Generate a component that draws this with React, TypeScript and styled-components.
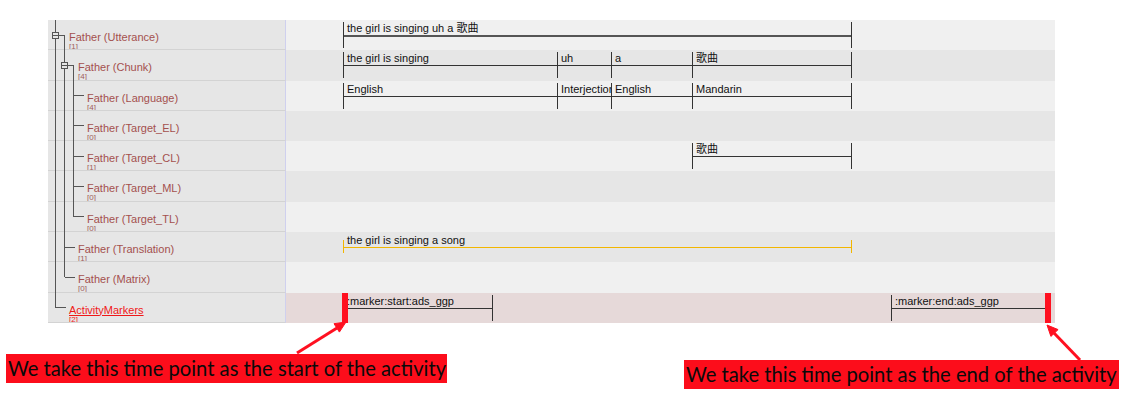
import React from "react";
import styled, { createGlobalStyle } from "styled-components";

const Global = createGlobalStyle`
  html, body { margin: 0; padding: 0; background: #ffffff; }
  body { font-family: "Liberation Sans", Arial, sans-serif; }
`;

const ROW_H = 30.3;
const LABEL_W = 238;

type Seg = { start: number; end: number; text: string; tone?: "dark" | "yellow"; heavy?: boolean };
type Tier = { label: string; count: number; indent: number; segs: Seg[]; marker?: boolean };

const tiers: Tier[] = [
  { label: "Father (Utterance)", count: 1, indent: 21, segs: [{ start: 57, end: 565, text: "the girl is singing uh a 歌曲", heavy: true }] },
  {
    label: "Father (Chunk)", count: 4, indent: 30,
    segs: [
      { start: 57, end: 271, text: "the girl is singing" },
      { start: 271, end: 325, text: "uh" },
      { start: 325, end: 406, text: "a" },
      { start: 406, end: 565, text: "歌曲" },
    ],
  },
  {
    label: "Father (Language)", count: 4, indent: 39,
    segs: [
      { start: 57, end: 271, text: "English" },
      { start: 271, end: 325, text: "Interjection" },
      { start: 325, end: 406, text: "English" },
      { start: 406, end: 565, text: "Mandarin" },
    ],
  },
  { label: "Father (Target_EL)", count: 0, indent: 39, segs: [] },
  { label: "Father (Target_CL)", count: 1, indent: 39, segs: [{ start: 406, end: 565, text: "歌曲" }] },
  { label: "Father (Target_ML)", count: 0, indent: 39, segs: [] },
  { label: "Father (Target_TL)", count: 0, indent: 39, segs: [] },
  { label: "Father (Translation)", count: 1, indent: 30, segs: [{ start: 57, end: 565, text: "the girl is singing a song", tone: "yellow" }] },
  { label: "Father (Matrix)", count: 0, indent: 30, segs: [] },
  {
    label: "ActivityMarkers", count: 2, indent: 21, marker: true,
    segs: [
      { start: 57, end: 206, text: ":marker:start:ads_ggp" },
      { start: 605, end: 761, text: ":marker:end:ads_ggp" },
    ],
  },
];

const Page = styled.div`
  position: relative;
  width: 1128px;
  height: 408px;
  overflow: hidden;
`;

const Panel = styled.div`
  position: relative;
  margin: 20px 0 0 48px;
  width: 1007px;
  display: flex;
  flex-direction: column;
`;

const Row = styled.div`
  display: flex;
  height: ${ROW_H}px;
`;

const LabelCell = styled.div<{ $indent: number }>`
  width: ${LABEL_W}px;
  box-sizing: border-box;
  flex: none;
  background: #e6e6e6;
  border-bottom: 1px solid #d3d3d3;
  border-right: 1px solid #cfd0ee;
  padding: 11px 0 0 ${(p) => p.$indent}px;
  display: flex;
  flex-direction: column;
  align-items: flex-start;
  overflow: hidden;
`;

const LabelText = styled.span<{ $marker?: boolean }>`
  font-size: 11px;
  line-height: 12px;
  color: ${(p) => (p.$marker ? "#f01818" : "#a4504e")};
  text-decoration: ${(p) => (p.$marker ? "underline" : "none")};
  white-space: nowrap;
`;

const CountText = styled.span<{ $marker?: boolean }>`
  font-size: 8px;
  line-height: 8px;
  color: ${(p) => (p.$marker ? "#f01818" : "#a05e5c")};
`;

const Track = styled.div<{ $shade: "light" | "dark" | "pink" }>`
  position: relative;
  flex: 1;
  background: ${(p) => (p.$shade === "light" ? "#f0f0f0" : p.$shade === "dark" ? "#e6e6e6" : "#e6d9d9")};
`;

const Segment = styled.div<{ $yellow?: boolean }>`
  position: absolute;
  top: 2px;
  height: 26px;
  box-sizing: border-box;
  border-left: 1px solid ${(p) => (p.$yellow ? "transparent" : "#333333")};
  border-right: 1px solid ${(p) => (p.$yellow ? "transparent" : "#333333")};
  &::before, &::after {
    content: "";
    display: ${(p) => (p.$yellow ? "block" : "none")};
    position: absolute;
    top: 6px;
    width: 1px;
    height: 13px;
    background: #f2b600;
  }
  &::before { left: -1px; }
  &::after { right: -1px; }
`;

const SegText = styled.div<{ $yellow?: boolean; $heavy?: boolean }>`
  height: 13px;
  padding-left: 3px;
  font-size: 11px;
  line-height: 12px;
  color: #111111;
  white-space: nowrap;
  overflow: hidden;
  border-bottom: ${(p) => (p.$heavy ? "2px solid #555555" : p.$yellow ? "1px solid #f2b600" : "1px solid #333333")};
  font-family: "Liberation Sans", "Noto Sans CJK SC", Arial, sans-serif;
`;

const TimeBar = styled.div`
  position: absolute;
  top: 0;
  width: 6px;
  height: 30px;
  background: #ff1020;
`;

const TreeLines = styled.svg`
  position: absolute;
  left: 0;
  top: 0;
  pointer-events: none;
`;

const Callouts = styled.div`
  display: flex;
  justify-content: space-between;
  align-items: flex-start;
  padding: 0 9px 0 6px;
`;

const Callout = styled.div<{ $top: number; $w: number }>`
  margin-top: ${(p) => p.$top}px;
  width: ${(p) => p.$w}px;
  height: 29px;
  box-sizing: border-box;
  background: #fc0d1b;
  color: #0a0a0a;
  font-family: Lato, "Open Sans", sans-serif;
  font-size: 20.2px;
  line-height: 29px;
  padding-left: 2px;
  white-space: nowrap;
  overflow: hidden;
`;

const Arrows = styled.svg`
  position: absolute;
  left: 0;
  top: 0;
  pointer-events: none;
`;

function Tree() {
  const y = (i: number) => i * ROW_H + 15;
  const c = "#555555";
  const v3Children = [2, 3, 4, 5, 6];
  const v2Children = [7, 8];
  return (
    <TreeLines width={60} height={310} viewBox="0 0 60 310">
      <g stroke={c} strokeWidth={1} fill="none" shapeRendering="crispEdges">
        <line x1={7.5} y1={0} x2={7.5} y2={y(9)} />
        <line x1={7.5} y1={y(9)} x2={18} y2={y(9)} />
        <rect x={4.5} y={y(0) - 3} width={6} height={6} fill="#e6e6e6" />
        <line x1={4.5} y1={y(0)} x2={16.5} y2={y(0)} />
        <line x1={16.5} y1={y(0)} x2={16.5} y2={y(8)} />
        {v2Children.map((i) => (
          <line key={i} x1={16.5} y1={y(i)} x2={27} y2={y(i)} />
        ))}
        <rect x={13.5} y={y(1) - 3} width={6} height={6} fill="#e6e6e6" />
        <line x1={13.5} y1={y(1)} x2={25.5} y2={y(1)} />
        <line x1={25.5} y1={y(1)} x2={25.5} y2={y(6)} />
        {v3Children.map((i) => (
          <line key={i} x1={25.5} y1={y(i)} x2={36} y2={y(i)} />
        ))}
      </g>
    </TreeLines>
  );
}

export default function App() {
  return (
    <Page>
      <Global />
      <Panel>
        {tiers.map((t, i) => {
          const shade = t.marker ? "pink" : i % 2 === 0 ? "light" : "dark";
          return (
            <Row key={t.label}>
              <LabelCell $indent={t.indent}>
                <LabelText $marker={t.marker}>{t.label}</LabelText>
                <CountText $marker={t.marker}>[{t.count}]</CountText>
              </LabelCell>
              <Track $shade={shade}>
                {t.segs.map((s) => (
                  <Segment
                    key={s.start}
                    $yellow={s.tone === "yellow"}
                    style={{ left: s.start, width: s.end - s.start + 1 }}
                  >
                    <SegText $yellow={s.tone === "yellow"} $heavy={s.heavy}>
                      {s.text}
                    </SegText>
                  </Segment>
                ))}
                {t.marker && (
                  <>
                    <TimeBar style={{ left: 56 }} />
                    <TimeBar style={{ left: 759 }} />
                  </>
                )}
              </Track>
            </Row>
          );
        })}
        <Tree />
      </Panel>
      <Callouts>
        <Callout $top={31} $w={441}>We take this time point as the start of the activity</Callout>
        <Callout $top={37} $w={435}>We take this time point as the end of the activity</Callout>
      </Callouts>
      <Arrows width={1128} height={408} viewBox="0 0 1128 408">
        <g stroke="#ff1020" strokeWidth={3} fill="#ff1020">
          <line x1={297} y1={353} x2={337} y2={328} />
          <polygon points="346,322 339.4,332.1 334,323.7" strokeWidth={1} />
          <line x1={1080} y1={360} x2={1054} y2={333} />
          <polygon points="1047,325 1058.1,329.6 1050.9,336.4" strokeWidth={1} />
        </g>
      </Arrows>
    </Page>
  );
}
